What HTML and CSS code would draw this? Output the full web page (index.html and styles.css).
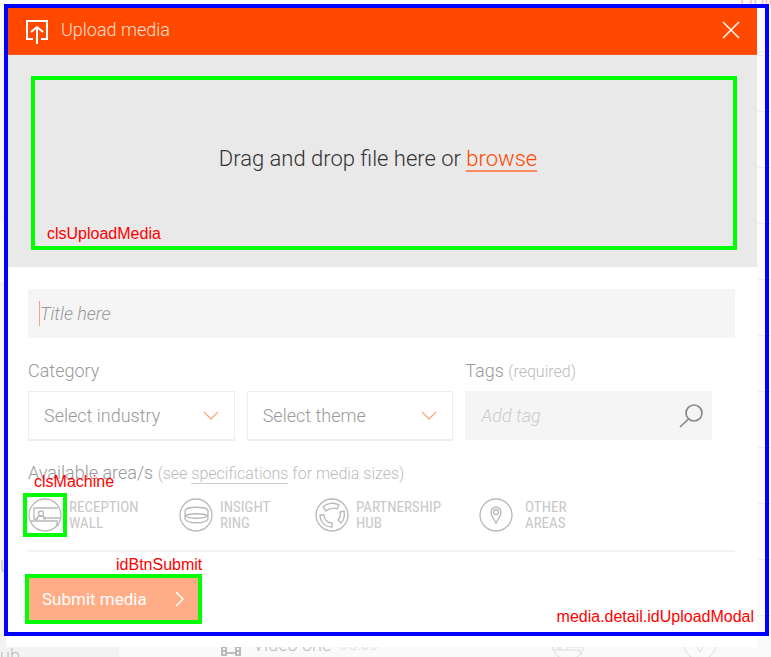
FILE: index.html
```html
<!DOCTYPE html>
<html lang="en">
<head>
<meta charset="utf-8">
<meta name="viewport" content="width=device-width, initial-scale=1">
<title>Upload media</title>
<link rel="stylesheet" href="styles.css">
</head>
<body>
<div class="page">
  <div class="backdrop" aria-hidden="true">
    <div class="backdrop-side"><span class="side-top">U</span><span class="side-bottom">ub</span></div>
    <div class="backdrop-main">
      <div class="backdrop-head"><span>Uplo</span></div>
      <div class="backdrop-rows"></div>
      <div class="backdrop-video">
        <svg class="film" viewBox="0 0 20 20"><path d="M1 0v19M5 0v19M15 0v19M19 0v19M5 4h10M5 16h10M1 2h4M1 6h4M1 10h4M1 14h4M1 18h4M15 2h4M15 6h4M15 10h4M15 14h4M15 18h4"/></svg>
        <span>Video one</span><small>05:00</small>
        <svg class="badge badge-wall" viewBox="0 0 34 34"><use href="#wall"/></svg>
        <svg class="badge" viewBox="0 0 34 34"><use href="#pin"/></svg>
      </div>
    </div>
  </div>

  <main class="modal">
    <header class="modal-head">
      <svg class="upload-icon" viewBox="0 0 24 26"><path d="M8 20H2V2h20v18h-6"/><path d="M12 25V9M6 13l6-5 6 5"/></svg>
      <h1>Upload media</h1>
      <button class="close" type="button" aria-label="Close"><svg viewBox="0 0 16 16"><path d="M0 0l16 16M16 0L0 16"/></svg></button>
    </header>

    <section class="drop">
      <div class="drop-area">
        <p>Drag and drop file here or <a href="#">browse</a></p>
        <span class="note note-upload">clsUploadMedia</span>
      </div>
    </section>

    <form class="form">
      <div class="title-field">
        <span class="caret"></span>
        <input type="text" placeholder="Title here" aria-label="Title">
      </div>

      <div class="fields">
        <label class="category" for="industry">Category</label>
        <label class="tags" for="tag">Tags <small>(required)</small></label>
        <div class="select">
          <select id="industry"><option>Select industry</option></select>
          <svg class="chevron" viewBox="0 0 16 10"><path d="M1 1l7 7 7-7"/></svg>
        </div>
        <div class="select">
          <select id="theme" aria-label="Theme"><option>Select theme</option></select>
          <svg class="chevron" viewBox="0 0 16 10"><path d="M1 1l7 7 7-7"/></svg>
        </div>
        <div class="tag-field">
          <input id="tag" type="text" placeholder="Add tag">
          <svg class="search" viewBox="0 0 24 24"><circle cx="15" cy="9" r="8"/><path d="M9.500 15L1 23"/></svg>
        </div>
      </div>

      <p class="areas-title">Available area/s <small>(see <a href="#">specifications</a> for media sizes)</small></p>
      <div class="areas">
        <button class="area" type="button">
          <span class="machine">
            <svg viewBox="0 0 34 34">
              <g id="wall"><circle cx="17" cy="17" r="16"/><path d="M30 10H6v11h3M17 20h16M2 23h27v4h2M15 20h2"/><circle cx="13" cy="15.500" r="2.500"/><path d="M9 23v-2c0-2 2-3 4-3s4 1 4 3v2"/></g>
            </svg>
            <span class="note note-machine">clsMachine</span>
          </span>
          <span>RECEPTION<br>WALL</span>
        </button>
        <button class="area" type="button">
          <svg viewBox="0 0 34 34"><circle cx="17" cy="17" r="16"/><path d="M6 13c0-5 23-5 23 0v8c-2 5-21 5-23 0zM6 18c5-3 18-3 23 0M6 18c5 3 18 3 23 0"/></svg>
          <span>INSIGHT<br>RING</span>
        </button>
        <button class="area" type="button">
          <svg viewBox="0 0 34 34"><circle cx="17" cy="17" r="16"/><path d="M8 9c4-4 11-5 16-2l-2 4c-4-2-7-1-11 2zM25 14l4-1c1 5 0 9-3 12l-3-3c2-2 3-5 2-8zM5 17h4c0 4 3 8 8 8v4C10 29 5 24 5 17z"/></svg>
          <span>PARTNERSHIP<br>HUB</span>
        </button>
        <button class="area area-other" type="button">
          <svg viewBox="0 0 34 34"><g id="pin"><circle cx="17" cy="17" r="16"/><path d="M17 25c-2-4-5-7-5-11a5 5 0 0 1 10 0c0 4-3 7-5 11z"/><circle cx="17" cy="14" r="2.500"/></g></svg>
          <span>OTHER<br>AREAS</span>
        </button>
      </div>

      <div class="actions">
        <button class="submit" type="submit">Submit media
          <svg viewBox="0 0 9 16"><path d="M1 1l7 7-7 7"/></svg>
        </button>
        <span class="note note-submit">idBtnSubmit</span>
      </div>
    </form>
    <div class="frame"><span class="note note-modal">media.detail.idUploadModal</span></div>
  </main>
</div>
</body>
</html>
```
FILE: styles.css
```css
* { box-sizing: border-box; }
body {
  margin: 0;
  background: #fafafa;
  font-family: Roboto, "Liberation Sans", sans-serif;
  font-weight: 300;
  color: #999;
}
h1, p { margin: 0; font-weight: 300; }
button, input, select { font: inherit; color: inherit; border: 0; margin: 0; padding: 0; background: none; border-radius: 0; }
svg { display: block; flex: none; fill: none; stroke: currentColor; }

.page { position: relative; overflow: hidden; padding: 8px 14px 10px 6px; }

.backdrop { position: absolute; inset: 0; display: flex; color: #bbb; }
.backdrop-side {
  width: 119px;
  display: flex;
  flex-direction: column;
  justify-content: space-between;
  background: linear-gradient(#fafafa 51px, #f5f5f5 51px 222px, #fafafa 222px 282px, #f3f3f3 282px);
  font-size: 18px;
}
.side-top { margin-top: 556px; }
.side-bottom { line-height: 20px; margin-bottom: -9px; }
.backdrop-main { flex: 1; min-width: 0; display: flex; flex-direction: column; }
.backdrop-head { display: flex; justify-content: flex-end; flex: none; height: 64px; margin-top: -12px; border-bottom: 1px solid #f0f0f0; font-size: 20px; line-height: 24px; color: #ffb399; }
.backdrop-head span { width: 31px; }
.backdrop-rows { flex: 1; background: repeating-linear-gradient(transparent 0 3px, #eee 3px 4px, transparent 4px 56px); }
.backdrop-video { display: flex; align-items: flex-end; height: 40px; margin-bottom: -4px; padding: 0 54px 4px 102px; gap: 8px; font-size: 18px; line-height: 24px; }
.backdrop-video small { font-size: 16px; color: #ddd; }
.film { width: 20px; height: 20px; margin-right: 4px; stroke-width: 2; }
.badge { width: 34px; height: 34px; margin-bottom: -4px; color: #ddd; }
.badge-wall { margin-left: auto; margin-right: 90px; }

.modal { position: relative; background: #fff; }
.modal-head {
  display: flex;
  align-items: center;
  gap: 12px;
  height: 47px;
  padding: 0 18px 2px 19px;
  background: #ff4800;
  border-bottom: 1px solid #ff5a1c;
  color: #fff;
}
.modal-head h1 { flex: 1; font-size: 18px; line-height: 24px; color: #ffe0d4; }
.upload-icon { width: 24px; height: 26px; stroke-width: 2; margin-top: 4px; }
.close svg { width: 16px; height: 16px; stroke-width: 1.5; overflow: visible; }

.drop { padding: 21px 20px 17px 25px; background: #e9e9e9; }
.drop-area {
  position: relative;
  display: flex;
  align-items: center;
  justify-content: center;
  height: 174px;
  padding: 0 12px 8px 0;
  border: 4px solid #0f0;
  font-size: 22px;
  line-height: 26px;
  color: #333;
}
.drop-area a { color: #ff4800; text-decoration: none; border-bottom: 2px solid #ff8a60; display: inline-block; line-height: 22px; }

.form { padding: 22px 22px 23px; }
.title-field { display: flex; align-items: center; height: 49px; padding: 0 11px; background: #f5f5f5; font-size: 18px; }
.caret { width: 1px; height: 25px; background: #ffa07c; }
input { flex: 1; min-width: 0; height: 100%; outline: 0; font-style: italic; }
input::placeholder { color: #999; opacity: 1; }

.fields {
  display: grid;
  grid-template-columns: minmax(0, 207fr) minmax(0, 207fr) minmax(0, 247fr);
  column-gap: 12px;
  row-gap: 7px;
  margin-top: 21px;
  padding-right: 23px;
  font-size: 18px;
  line-height: 24px;
}
.category { grid-column: span 2; }
.fields small, .areas-title small { font-size: 16px; color: #bbb; }
.select { position: relative; }
.select select { display: block; width: 100%; height: 50px; padding: 0 15px; border: 1px solid #eee; border-bottom-width: 2px; appearance: none; outline: 0; }
.chevron { position: absolute; right: 16px; top: 20px; width: 16px; height: 10px; color: #ffa583; stroke-width: 1.3; pointer-events: none; }
.tag-field { display: flex; align-items: center; height: 49px; padding: 0 9px 0 16px; background: #f5f5f5; }
.tag-field input::placeholder { color: #ccc; }
.search { width: 24px; height: 24px; stroke-width: 1.7; color: #888; }

.areas-title { margin-top: 20px; font-size: 18px; line-height: 24px; }
.areas-title a { display: inline-block; line-height: 18px; color: inherit; text-decoration: none; border-bottom: 1px solid #ccc; }
.areas { display: grid; grid-template-columns: 151fr 136fr 164fr 256fr; margin-top: 12px; padding-bottom: 18px; border-bottom: 2px solid #f3f3f3; }
.area { display: flex; align-items: center; gap: 7px; text-align: left; font-family: "Roboto Condensed", "Liberation Sans Narrow", Roboto, sans-serif; font-size: 15px; line-height: 16px; font-weight: 400; color: #c8c8c8; }
.area svg { width: 34px; height: 34px; stroke-width: 1.3; color: #b8b8b8; }
.area-other { gap: 12px; }
.machine { position: relative; }
.machine::after { content: ""; position: absolute; inset: -5px; border: 4px solid #0f0; }

.actions { position: relative; margin: 22px 0 0 -3px; }
.submit {
  display: flex;
  align-items: center;
  justify-content: space-between;
  width: 177px;
  height: 50px;
  padding: 0 14px 0 13px;
  border: 4px solid #0f0;
  background: #ffad87;
  color: #fff;
  font-size: 17px;
  font-weight: 400;
}
.submit svg { width: 9px; height: 16px; stroke-width: 1.5; }

.frame { position: absolute; inset: -4px -12px 11px -2px; border: 4px solid #00f; pointer-events: none; }
.note { position: absolute; font: 400 16px/18px "Liberation Sans", sans-serif; color: #f00; white-space: nowrap; }
.note-upload { left: 12px; bottom: 3px; }
.note-machine { left: 6px; top: -25px; z-index: 1; }
.note-submit { left: 91px; top: -18px; }
.note-modal { right: 11px; bottom: 6px; }
```
